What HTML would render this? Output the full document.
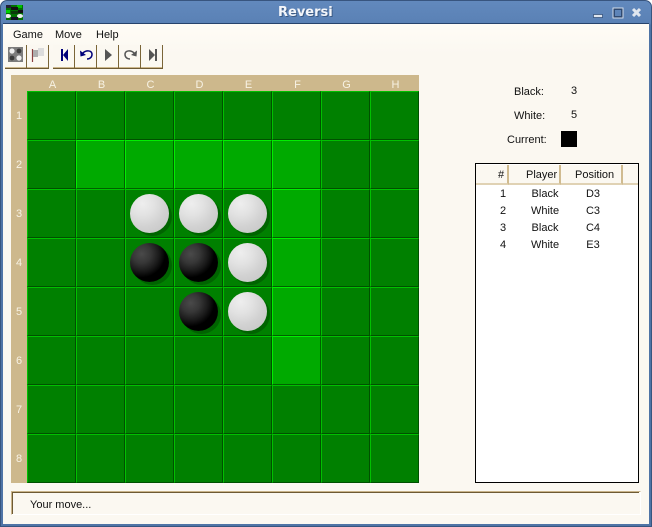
<!DOCTYPE html>
<html><head><meta charset="utf-8"><style>
html,body{margin:0;padding:0;background:#fff}
#w{position:relative;width:652px;height:527px;overflow:hidden;font-family:"Liberation Sans",sans-serif;font-size:11px;color:#111;background:#fff}
#frame{position:absolute;left:0;top:0;width:652px;height:527px;box-sizing:border-box;background:linear-gradient(#6289bd,#5a81b5 22px,#4f74a6 24px);border:1px solid #38557f;border-radius:7px 7px 0 0}
#client{position:absolute;left:3px;top:23px;width:646px;height:501px;background:linear-gradient(#fffcf6,#fbf8f1 30px);border-top:1px solid #26436c;box-sizing:border-box}
.a{position:absolute;white-space:nowrap}
.btn{position:absolute;top:45px;width:22px;height:24px;box-sizing:border-box;border-right:1px solid #7a6538;border-bottom:1px solid #6e5a33;box-shadow:inset 0 -1px 0 #cdb88c;background:#fbf8f1}
#board{position:absolute;left:11px;top:75px;width:408px;height:408px;background:#cdb88c}
#grid{position:absolute;left:27px;top:91px;width:392px;height:392px;display:grid;grid-template-columns:repeat(8,49px);grid-auto-rows:49px}
#grid i{display:block;box-sizing:border-box;background:#008000;border-top:1px solid #00c000;border-left:1px solid #00c000;border-right:1px solid #005000;border-bottom:1px solid #005000}
#grid i.h{background:#00aa00;border-top-color:#00ee00;border-left-color:#00ee00;border-right-color:#006000;border-bottom-color:#006000}
.d{position:absolute;width:39px;height:39px;border-radius:50%;box-shadow:3px 3px 0 0 #006400}
.wd{background:radial-gradient(circle at 32% 25%,#eeeeee,#e2e2e2 30%,#d2d2d2 58%,#cacaca 80%)}
.bd{background:radial-gradient(circle at 30% 28%,#4a4a4a,#363636 24%,#1a1a1a 44%,#000 60%)}
.l{position:absolute;color:#f7f2e4;font-size:11px;text-align:center}
#tbl{position:absolute;left:475px;top:163px;width:164px;height:320px;box-sizing:border-box;background:#fff;border:1px solid #000}
.th{position:absolute;top:1px;height:20px;box-sizing:border-box;background:#fbf8f1;border-bottom:2px solid #e0d2b4;border-right:2px solid #d0bb90;line-height:21px;text-align:left}
.r span{position:absolute;text-align:center;height:17px;line-height:17px}
</style></head><body><div id="w">
<div id="frame"></div>
<div id="client"></div>

<svg class="a" style="left:6px;top:5px" width="17" height="15" viewBox="0 0 17 15">
<rect width="17" height="15" fill="#007000"/>
<rect x="0" y="0" width="5" height="3" fill="#223"/><rect x="11" y="0" width="5" height="3" fill="#00c000"/>
<rect x="5" y="2" width="7" height="3" fill="#111"/><rect x="0" y="5" width="4" height="3" fill="#00d000"/>
<rect x="12" y="5" width="5" height="3" fill="#111"/><rect x="5" y="6" width="7" height="3" fill="#0a3a0a"/>
<ellipse cx="2" cy="11" rx="3" ry="2" fill="#eee"/><ellipse cx="14" cy="11" rx="3" ry="2" fill="#eee"/>
<rect x="5" y="12" width="7" height="3" fill="#112"/>
</svg>
<div class="a" style="left:279px;top:6px;font:bold 13px 'DejaVu Sans',sans-serif;color:#1a3050;opacity:.5">Reversi</div>
<div class="a" style="left:278px;top:5px;font:bold 13px 'DejaVu Sans',sans-serif;color:#f4f6fa">Reversi</div>

<svg class="a" style="left:590px;top:5px" width="56" height="15" viewBox="0 0 56 15">
<rect x="3.500" y="9.500" width="9" height="3" fill="#dfe6ef" stroke="#2f4a72" stroke-width=".7"/>
<rect x="24" y="4" width="8" height="8" fill="none" stroke="#2f4a72" stroke-width="2"/>
<rect x="23" y="3" width="10" height="10" fill="none" stroke="#dfe6ef" stroke-width=".9"/>
<path d="M44.500 4l7 7M51.500 4l-7 7" transform="translate(-1.500 0)" stroke="#dfe6ef" stroke-width="3" fill="none"/>
</svg>

<div class="a" style="left:13px;top:28px;line-height:14px">Game</div>
<div class="a" style="left:55px;top:28px;line-height:14px">Move</div>
<div class="a" style="left:96px;top:28px;line-height:14px">Help</div>

<div class="btn" style="left:5px"></div><div class="btn" style="left:27px"></div>
<div class="btn" style="left:53px"></div><div class="btn" style="left:75px"></div><div class="btn" style="left:97px"></div><div class="btn" style="left:119px"></div><div class="btn" style="left:141px"></div>

<svg class="a" style="left:0;top:45px" width="170" height="24" viewBox="0 45 170 24">
<rect x="8" y="47" width="15" height="15" fill="#7c7c7c"/><circle cx="12" cy="51" r="2.600" fill="#eee"/><circle cx="19" cy="51" r="2.400" fill="#3a3a3a"/><circle cx="12" cy="58" r="2.400" fill="#3a3a3a"/><circle cx="19" cy="58" r="2.600" fill="#eee"/>
<path d="M32.500 49V62" stroke="#8a3f3f" stroke-width="1.200"/><path d="M33 50h5v-2h6v8h-6v1h-5z" fill="#adadad"/><path d="M38 48h6v8h-6z" fill="#dcdcdc"/>
<rect x="61" y="49" width="2" height="12" fill="#00007a"/><path d="M68 49v12l-5-6z" fill="#00007a"/>
<path d="M83 53C86 50 92 50 92 54.500C92 57 90 59 87 59" fill="none" stroke="#00007a" stroke-width="1.500"/><path d="M80 50.500l.5 6 5.500-1.500z" fill="#00007a"/>
<path d="M105 49v12l7-6z" fill="#555"/>
<path d="M134 53C131 50 125 50 125 54.500C125 57 127 59 130 59" fill="none" stroke="#555" stroke-width="1.500"/><path d="M137 50.500l-.5 6-5.500-1.500z" fill="#555"/>
<path d="M149 49v12l6-6z" fill="#555"/><rect x="155" y="49" width="2" height="12" fill="#555"/>
</svg>

<div id="board"></div>
<div id="grid">
<i></i><i></i><i></i><i></i><i></i><i></i><i></i><i></i>
<i></i><i class="h"></i><i class="h"></i><i class="h"></i><i class="h"></i><i class="h"></i><i></i><i></i>
<i></i><i></i><i></i><i></i><i></i><i class="h"></i><i></i><i></i>
<i></i><i></i><i></i><i></i><i></i><i class="h"></i><i></i><i></i>
<i></i><i></i><i></i><i></i><i></i><i class="h"></i><i></i><i></i>
<i></i><i></i><i></i><i></i><i></i><i class="h"></i><i></i><i></i>
<i></i><i></i><i></i><i></i><i></i><i></i><i></i><i></i>
<i></i><i></i><i></i><i></i><i></i><i></i><i></i><i></i>
</div>
<div class="l" style="left:28px;top:78px;width:49px;line-height:14px">A</div>
<div class="l" style="left:77px;top:78px;width:49px;line-height:14px">B</div>
<div class="l" style="left:126px;top:78px;width:49px;line-height:14px">C</div>
<div class="l" style="left:175px;top:78px;width:49px;line-height:14px">D</div>
<div class="l" style="left:224px;top:78px;width:49px;line-height:14px">E</div>
<div class="l" style="left:273px;top:78px;width:49px;line-height:14px">F</div>
<div class="l" style="left:322px;top:78px;width:49px;line-height:14px">G</div>
<div class="l" style="left:371px;top:78px;width:49px;line-height:14px">H</div>
<div class="l" style="left:11px;top:110px;width:16px">1</div>
<div class="l" style="left:11px;top:159px;width:16px">2</div>
<div class="l" style="left:11px;top:208px;width:16px">3</div>
<div class="l" style="left:11px;top:257px;width:16px">4</div>
<div class="l" style="left:11px;top:306px;width:16px">5</div>
<div class="l" style="left:11px;top:355px;width:16px">6</div>
<div class="l" style="left:11px;top:404px;width:16px">7</div>
<div class="l" style="left:11px;top:453px;width:16px">8</div>

<div class="d wd" style="left:130px;top:194px"></div>
<div class="d wd" style="left:179px;top:194px"></div>
<div class="d wd" style="left:228px;top:194px"></div>
<div class="d bd" style="left:130px;top:243px"></div>
<div class="d bd" style="left:179px;top:243px"></div>
<div class="d wd" style="left:228px;top:243px"></div>
<div class="d bd" style="left:179px;top:292px"></div>
<div class="d wd" style="left:228px;top:292px"></div>

<div class="a" style="left:514px;top:85px;line-height:14px">Black:</div>
<div class="a" style="left:571px;top:84px;line-height:14px">3</div>
<div class="a" style="left:514px;top:109px;line-height:14px">White:</div>
<div class="a" style="left:571px;top:108px;line-height:14px">5</div>
<div class="a" style="left:507px;top:133px;line-height:14px">Current:</div>
<div class="a" style="left:561px;top:131px;width:16px;height:16px;background:#000"></div>

<div id="tbl">
<div class="th" style="left:0;width:33px;padding-left:22px">#</div>
<div class="th" style="left:33px;width:52px;padding-left:17px">Player</div>
<div class="th" style="left:85px;width:62px;padding-left:14px">Position</div>
<div class="th" style="left:147px;width:15px;border-right:0"></div>
<div class="r">
<span style="top:22px;left:0;width:54px">1</span><span style="top:22px;left:40px;width:58px">Black</span><span style="top:22px;left:90px;width:54px">D3</span>
<span style="top:39px;left:0;width:54px">2</span><span style="top:39px;left:40px;width:58px">White</span><span style="top:39px;left:90px;width:54px">C3</span>
<span style="top:56px;left:0;width:54px">3</span><span style="top:56px;left:40px;width:58px">Black</span><span style="top:56px;left:90px;width:54px">C4</span>
<span style="top:73px;left:0;width:54px">4</span><span style="top:73px;left:40px;width:58px">White</span><span style="top:73px;left:90px;width:54px">E3</span>
</div>
</div>

<div class="a" style="left:11px;top:491px;width:630px;height:24px;box-sizing:border-box;border-top:1px solid #c9b48a;border-left:1px solid #c9b48a;border-right:1px solid #fff;border-bottom:1px solid #fff"></div>
<div class="a" style="left:12px;top:492px;width:627px;height:22px;box-sizing:border-box;border-top:1px solid #6e5a33;border-left:1px solid #6e5a33"></div>
<div class="a" style="left:30px;top:498px;line-height:14px">Your move...</div>
</div></body></html>
